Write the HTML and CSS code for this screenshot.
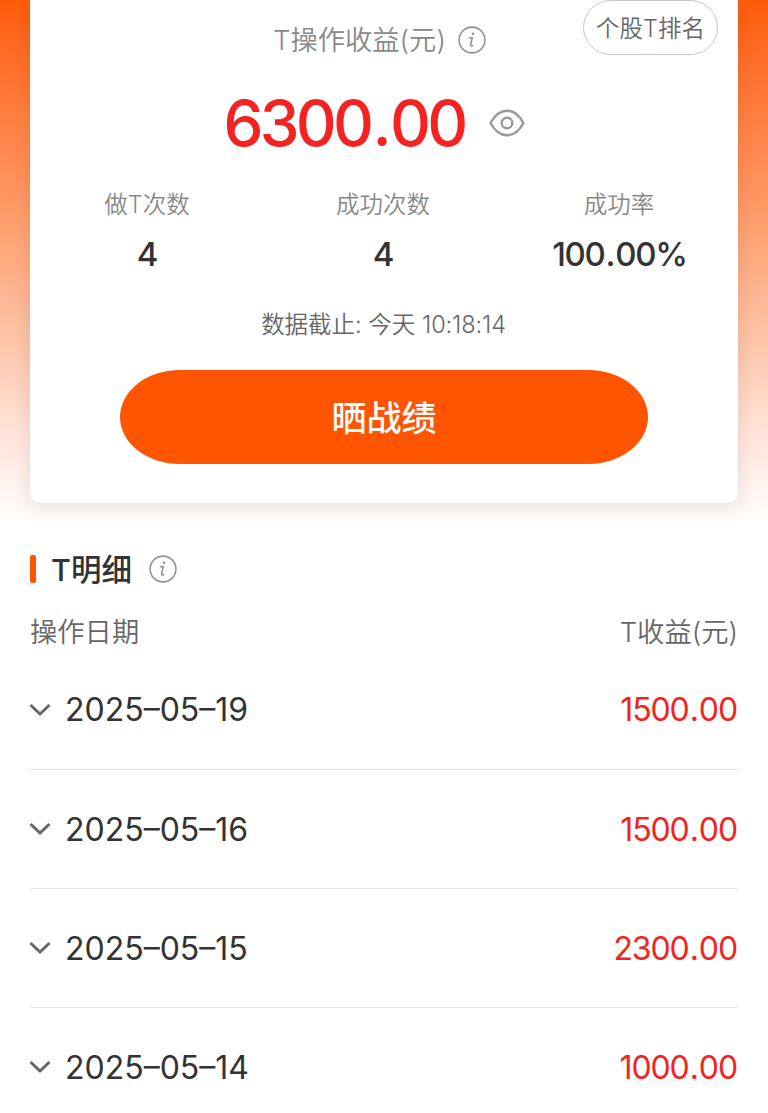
FILE: index.html
```html
<!DOCTYPE html>
<html lang="zh-CN">
<head>
<meta charset="utf-8">
<title>T操作收益</title>
<link rel="stylesheet" href="styles.css">
</head>
<body>
<main class="page">
  <section class="hero">
    <div class="card">
      <a class="rank">个股T排名</a>
      <div class="label"><span class="label-text">T操作收益(元)</span>
        <svg class="info" viewBox="0 0 28 28"><circle cx="14" cy="14" r="12.9"/><path d="M10.800 11.800h3.400l-1.600 7.200q-.3 1.500 2.600 .6"/><circle class="dot" cx="15" cy="7.800" r="1.300"/></svg>
      </div>
      <div class="total"><span class="total-num">6300<span class="point">.</span>00</span>
        <svg class="eye" viewBox="0 0 36 28"><path d="M1.600 14C5 7.500 10.500 1.700 18 1.700S31 7.500 34.400 14C31 20.500 25.500 26.300 18 26.300S5 20.500 1.600 14Z"/><circle cx="18" cy="14" r="5.300"/></svg>
      </div>
      <div class="stats">
        <div class="stat"><span class="stat-name">做T次数</span><span class="stat-value">4</span></div>
        <div class="stat"><span class="stat-name">成功次数</span><span class="stat-value">4</span></div>
        <div class="stat"><span class="stat-name">成功率</span><span class="stat-value rate">100<span class="rate-point">.</span>00%</span></div>
      </div>
      <div class="updated"><span>数据截止: 今天 </span><span class="time">10:18:14</span></div>
      <div class="share">晒战绩</div>
    </div>
  </section>
  <section class="details">
    <h2 class="title"><span class="bar"></span><span class="title-text">T明细</span>
      <svg class="info" viewBox="0 0 28 28"><circle cx="14" cy="14" r="12.900"/><path d="M10.800 11.800h3.400l-1.600 7.200q-.3 1.500 2.600 .6"/><circle class="dot" cx="15" cy="7.800" r="1.300"/></svg>
    </h2>
    <div class="head"><span class="head-left">操作日期</span><span class="head-right">T收益(元)</span></div>
    <div class="row"><svg class="chev" viewBox="0 0 22 14"><path d="M1.500 2l9.500 9 9.500-9"/></svg><span class="date">2025–05–19</span><span class="amount">1500<span class="amount-point">.</span>00</span></div>
    <div class="row"><svg class="chev" viewBox="0 0 22 14"><path d="M1.500 2l9.500 9 9.500-9"/></svg><span class="date">2025–05–16</span><span class="amount">1500<span class="amount-point">.</span>00</span></div>
    <div class="row"><svg class="chev" viewBox="0 0 22 14"><path d="M1.500 2l9.500 9 9.500-9"/></svg><span class="date">2025–05–15</span><span class="amount">2300<span class="amount-point">.</span>00</span></div>
    <div class="row"><svg class="chev" viewBox="0 0 22 14"><path d="M1.500 2l9.500 9 9.500-9"/></svg><span class="date">2025–05–14</span><span class="amount">1000<span class="amount-point">.</span>00</span></div>
  </section>
</main>
</body>
</html>
```
FILE: styles.css
```css
* { box-sizing: border-box; }
body { margin: 0; background: #fff; color: #333; font-family: Inter, "Noto Sans CJK SC", sans-serif; }
.page { width: 768px; height: 1113px; overflow: hidden; }
.hero { height: 528px; padding: 0 30px; background: linear-gradient(#ff5c0c 0, #ff7a3b 100px, #ff9661 195px, #fdc6ab 345px, #ffe6dc 440px, #fff 525px); }
.card { position: relative; height: 503px; background: #fff; border-radius: 0 0 10px 10px; box-shadow: 0 4px 18px rgba(60, 40, 30, .12); display: flex; flex-direction: column; }
.rank { position: absolute; right: 20px; top: 0; width: 135px; height: 55px; border: 1.5px solid #c8c8c8; border-radius: 28px; font-size: 23.500px; font-weight: 350; line-height: 55px; text-align: center; color: #666; white-space: nowrap; }
.label { display: flex; align-items: center; justify-content: center; height: 80px; padding-right: 9px; gap: 12px; font-size: 27.300px; font-weight: 350; line-height: 40px; color: #888; }
.label-text { padding-top: 2px; }
.info { width: 28px; height: 28px; fill: none; stroke: #949494; stroke-width: 1.6; }
.info .dot { fill: #949494; stroke: none; }
.total { display: flex; align-items: center; justify-content: center; height: 86px; padding-right: 20px; gap: 24px; }
.total-num { font: 550 63.500px/86px Inter, sans-serif; color: #f52222; letter-spacing: -3.700px; }
.point { margin: 0 2px; }
.eye { width: 36px; height: 28px; fill: none; stroke: #999; stroke-width: 2.4; }
.stats { display: grid; grid-template-columns: repeat(3, 236px); height: 130px; }
.stat { display: flex; flex-direction: column; align-items: center; padding-top: 21px; }
.stat-name { padding-right: 2px; font-size: 23.500px; font-weight: 350; line-height: 36px; color: #888; }
.stat-value { font: 550 33px/63px Inter, sans-serif; color: #333; padding-right: 1px; }
.rate { letter-spacing: -1.300px; }
.rate-point { margin: 0 1px; }
.updated { display: flex; justify-content: center; height: 56px; padding-right: 1px; font-size: 23.500px; font-weight: 350; line-height: 58px; color: #666; white-space: pre; }
.time { font-size: 23.500px; letter-spacing: -.1px; }
.share { align-self: center; margin-top: 18px; width: 528px; height: 94px; border-radius: 60px / 47px; background: #ff5400; color: #fff; font-size: 35px; font-weight: 500; line-height: 96px; text-align: center; }
.details { padding: 0 30px; }
.title { display: flex; align-items: center; height: 81px; margin: 0; font-size: 30.500px; font-weight: 500; line-height: 42px; }
.bar { width: 6px; height: 28px; margin-right: 15px; border-radius: 2px; background: #ff5400; }
.title-text { margin-right: 17px; padding-top: 2px; }
.head { display: flex; justify-content: space-between; height: 41px; line-height: 47px; font-size: 27.300px; font-weight: 350; color: #666; }
.row { display: flex; align-items: center; height: 119px; border-bottom: 1px solid #e8e8e8; font-size: 32px; color: #333; }
.head + .row { height: 120px; }
.chev { width: 22px; height: 14px; margin-right: 14px; margin-left: -1px; fill: none; stroke: #666; stroke-width: 3; }
.amount { margin-left: auto; padding-right: 1px; color: #f52222; letter-spacing: -1.100px; }
.amount-point { margin: 0 1px; }
```
